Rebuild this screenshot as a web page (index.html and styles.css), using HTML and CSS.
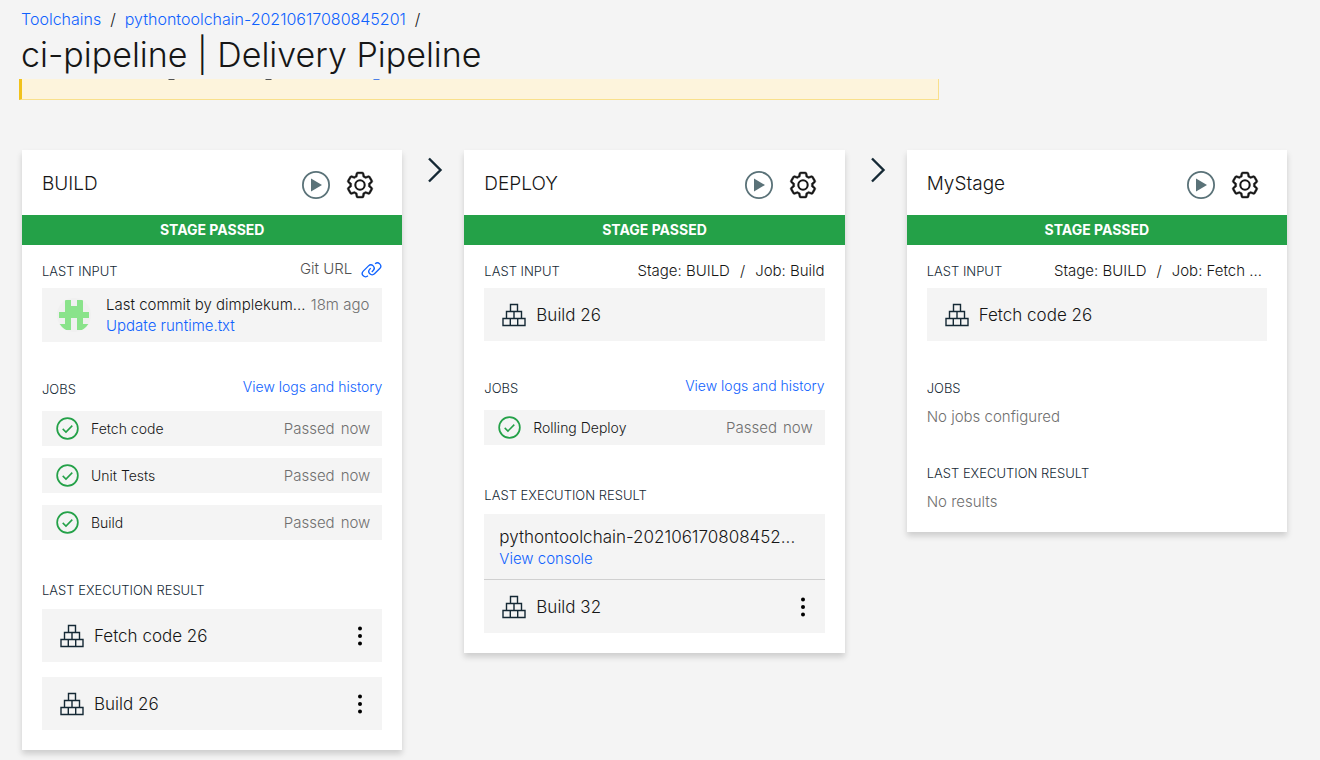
FILE: index.html
```html
<!DOCTYPE html>
<html lang="en">
<head>
<meta charset="utf-8">
<title>ci-pipeline | Delivery Pipeline</title>
<link rel="stylesheet" href="styles.css">
</head>
<body>
<svg class="sprite" aria-hidden="true">
  <symbol id="play" viewBox="0 0 28 28">
    <circle cx="14" cy="14" r="13.1" fill="none" stroke="#5a7278" stroke-width="1.8"/>
    <path d="M9 7.5v13L20 14z" fill="#5a7278"/>
  </symbol>
  <symbol id="gear" viewBox="0 0 32 32">
    <path fill="#161616" d="M27 16.76v-1.53l1.92-1.68A2 2 0 0 0 29.3 11l-2.36-4a2 2 0 0 0-1.73-1 2 2 0 0 0-.64.1l-2.43.82a11.35 11.35 0 0 0-1.31-.75l-.51-2.52a2 2 0 0 0-2-1.61h-4.68a2 2 0 0 0-2 1.61l-.51 2.52a11.48 11.48 0 0 0-1.32.75l-2.38-.86A2 2 0 0 0 6.79 6a2 2 0 0 0-1.73 1L2.7 11a2 2 0 0 0 .41 2.51L5 15.24v1.53l-1.89 1.68A2 2 0 0 0 2.7 21l2.36 4a2 2 0 0 0 1.73 1 2 2 0 0 0 .64-.1l2.43-.82a11.35 11.35 0 0 0 1.31.75l.51 2.52a2 2 0 0 0 2 1.61h4.72a2 2 0 0 0 2-1.61l.51-2.52a11.48 11.48 0 0 0 1.32-.75l2.42.82a2 2 0 0 0 .64.1 2 2 0 0 0 1.73-1l2.28-4a2 2 0 0 0-.41-2.51zM25.21 24l-3.43-1.16a8.86 8.86 0 0 1-2.71 1.57L18.36 28h-4.72l-.71-3.55a9.36 9.36 0 0 1-2.7-1.57L6.79 24l-2.36-4 2.72-2.4a8.9 8.9 0 0 1 0-3.13L4.43 12l2.36-4 3.43 1.16a8.86 8.86 0 0 1 2.71-1.57L13.64 4h4.72l.71 3.55a9.36 9.36 0 0 1 2.7 1.57L25.21 8l2.36 4-2.72 2.4a8.9 8.9 0 0 1 0 3.13L27.57 20z" stroke="#161616" stroke-width=".4"/>
    <circle cx="16" cy="16" r="5" fill="none" stroke="#161616" stroke-width="2.2"/>
  </symbol>
  <symbol id="check" viewBox="0 0 24 24">
    <circle cx="12" cy="12" r="10.8" fill="none" stroke="#24a148" stroke-width="1.8"/>
    <path d="M7 12.4l3.4 3.3L17 9" fill="none" stroke="#24a148" stroke-width="1.6"/>
  </symbol>
  <symbol id="boxes" viewBox="0 0 24 24">
    <path d="M8.5 1.5h7v7h-7zM4.5 8.5H12v7H4.5zM12 8.500h7.500v7H12zM1 15.500h7.300v7H1zM8.300 15.500h7.400v7H8.300zM15.700 15.500H23v7h-7.300z" fill="none" stroke="#152935" stroke-width="1.4"/>
  </symbol>
  <symbol id="dots" viewBox="0 0 6 20">
    <circle cx="3" cy="2.5" r="2"/><circle cx="3" cy="10" r="2"/><circle cx="3" cy="17.5" r="2"/>
  </symbol>
  <symbol id="next" viewBox="0 0 16 26">
    <path d="M2 1.5L13.5 13 2 24.5" fill="none" stroke="#152935" stroke-width="2.4"/>
  </symbol>
  <symbol id="link" viewBox="0 0 32 32">
    <path fill="#0f62fe" d="M29.25 6.76a6 6 0 0 0-8.5 0l1.42 1.42a4 4 0 1 1 5.67 5.67l-8 8a4 4 0 1 1-5.67-5.66l1.41-1.42-1.41-1.42-1.42 1.42a6 6 0 0 0 0 8.5A6 6 0 0 0 17 25a6 6 0 0 0 4.27-1.76l8-8a6 6 0 0 0-.02-8.48zM4.19 24.82a4 4 0 0 1 0-5.67l8-8a4 4 0 0 1 5.67 0A3.94 3.94 0 0 1 19 14a4 4 0 0 1-1.17 2.85L15.71 19l1.42 1.42 2.12-2.12a6 6 0 0 0-8.51-8.51l-8 8a6 6 0 0 0 0 8.51A6 6 0 0 0 7 28a6.07 6.07 0 0 0 4.28-1.76l-1.42-1.42a4 4 0 0 1-5.67 0z"/>
  </symbol>
</svg>

<header class="header">
  <nav class="crumbs" aria-label="Breadcrumb">
    <a href="#">Toolchains</a><span>/</span><a href="#">pythontoolchain-20210617080845201</a><span>/</span>
  </nav>
  <h1 class="title">ci-pipeline | Delivery Pipeline</h1>
</header>
<div class="banner">
  <svg class="banner-marks" viewBox="0 0 400 2" aria-hidden="true">
    <path d="M146 0h7l-1 1h-5zM243 0h7l-1 1h-5z" fill="#525252"/><path d="M351 0h7l-1 1h-5z" fill="#4c7fe8"/>
  </svg>
</div>

<main class="pipeline">
  <article class="card">
    <header class="card-head">
      <h2 class="card-title">BUILD</h2>
      <button class="icon-btn" aria-label="Run stage"><svg class="i-play"><use href="#play"/></svg></button>
      <button class="icon-btn" aria-label="Configure stage"><svg class="i-gear"><use href="#gear"/></svg></button>
    </header>
    <p class="status">STAGE PASSED</p>
    <div class="card-body">
      <section>
        <div class="section-head"><h3 class="label">LAST INPUT</h3><a class="git" href="#">Git URL <svg class="i-link"><use href="#link"/></svg></a></div>
        <div class="commit">
          <svg class="avatar" viewBox="0 0 34 34" aria-hidden="true">
            <defs><clipPath id="round"><circle cx="17" cy="17" r="17"/></clipPath></defs>
            <circle cx="17" cy="17" r="17" fill="#f0f0f0"/>
            <path clip-path="url(#round)" fill="#8ae38b" d="M8 2h6v6h6V2h6v12h6v6h-6v6h6v6H20V20h-6v12H2v-6h6v-6H2v-6h6z"/>
          </svg>
          <div class="commit-text">
            <div class="commit-line"><span>Last commit by dimplekum...</span><time class="muted">18m ago</time></div>
            <a href="#">Update runtime.txt</a>
          </div>
        </div>
      </section>
      <section class="jobs">
        <div class="section-head"><h3 class="label">JOBS</h3><a class="logs" href="#">View logs and history</a></div>
        <ul class="job-list">
          <li class="job"><svg class="i-check"><use href="#check"/></svg><span class="job-name">Fetch code</span><span class="muted">Passed</span><span class="muted">now</span></li>
          <li class="job"><svg class="i-check"><use href="#check"/></svg><span class="job-name">Unit Tests</span><span class="muted">Passed</span><span class="muted">now</span></li>
          <li class="job"><svg class="i-check"><use href="#check"/></svg><span class="job-name">Build</span><span class="muted">Passed</span><span class="muted">now</span></li>
        </ul>
      </section>
      <section class="results">
        <h3 class="label">LAST EXECUTION RESULT</h3>
        <div class="result-list">
          <div class="artifact"><svg class="i-boxes"><use href="#boxes"/></svg><span class="artifact-name">Fetch code 26</span><button class="icon-btn" aria-label="More"><svg class="i-dots"><use href="#dots"/></svg></button></div>
          <div class="artifact"><svg class="i-boxes"><use href="#boxes"/></svg><span class="artifact-name">Build 26</span><button class="icon-btn" aria-label="More"><svg class="i-dots"><use href="#dots"/></svg></button></div>
        </div>
      </section>
    </div>
  </article>

  <svg class="i-next" aria-hidden="true"><use href="#next"/></svg>

  <article class="card">
    <header class="card-head">
      <h2 class="card-title">DEPLOY</h2>
      <button class="icon-btn" aria-label="Run stage"><svg class="i-play"><use href="#play"/></svg></button>
      <button class="icon-btn" aria-label="Configure stage"><svg class="i-gear"><use href="#gear"/></svg></button>
    </header>
    <p class="status">STAGE PASSED</p>
    <div class="card-body">
      <section>
        <div class="section-head"><h3 class="label">LAST INPUT</h3><p class="source"><span>Stage: BUILD</span><span>/</span><span>Job: Build</span></p></div>
        <div class="artifact"><svg class="i-boxes"><use href="#boxes"/></svg><span class="artifact-name">Build 26</span></div>
      </section>
      <section class="jobs">
        <div class="section-head"><h3 class="label">JOBS</h3><a class="logs" href="#">View logs and history</a></div>
        <ul class="job-list">
          <li class="job"><svg class="i-check"><use href="#check"/></svg><span class="job-name">Rolling Deploy</span><span class="muted">Passed</span><span class="muted">now</span></li>
        </ul>
      </section>
      <section class="results">
        <h3 class="label">LAST EXECUTION RESULT</h3>
        <div class="deployment">
          <p class="deployment-name">pythontoolchain-202106170808452...</p>
          <a href="#">View console</a>
        </div>
        <div class="artifact"><svg class="i-boxes"><use href="#boxes"/></svg><span class="artifact-name">Build 32</span><button class="icon-btn" aria-label="More"><svg class="i-dots"><use href="#dots"/></svg></button></div>
      </section>
    </div>
  </article>

  <svg class="i-next" aria-hidden="true"><use href="#next"/></svg>

  <article class="card">
    <header class="card-head">
      <h2 class="card-title">MyStage</h2>
      <button class="icon-btn" aria-label="Run stage"><svg class="i-play"><use href="#play"/></svg></button>
      <button class="icon-btn" aria-label="Configure stage"><svg class="i-gear"><use href="#gear"/></svg></button>
    </header>
    <p class="status">STAGE PASSED</p>
    <div class="card-body">
      <section>
        <div class="section-head"><h3 class="label">LAST INPUT</h3><p class="source source-cut"><span>Stage: BUILD</span><span>/</span><span>Job: Fetch ...</span></p></div>
        <div class="artifact"><svg class="i-boxes"><use href="#boxes"/></svg><span class="artifact-name">Fetch code 26</span></div>
      </section>
      <section class="jobs">
        <h3 class="label">JOBS</h3>
        <p class="empty">No jobs configured</p>
      </section>
      <section class="results-empty">
        <h3 class="label">LAST EXECUTION RESULT</h3>
        <p class="empty">No results</p>
      </section>
    </div>
  </article>
</main>
</body>
</html>
```

FILE: styles.css
```css
* { box-sizing: border-box; }

body {
  margin: 0;
  background: #f4f4f4;
  color: #161616;
  font: 300 15px/20px Inter, "Open Sans", sans-serif;
}

h1, h2, h3, p, ul { margin: 0; padding: 0; font-weight: 300; }
ul { list-style: none; }
a { color: #0f62fe; text-decoration: none; }
svg { display: block; flex: none; }

.sprite { position: absolute; width: 0; height: 0; }

.icon-btn {
  display: flex;
  padding: 0;
  border: 0;
  background: none;
  cursor: pointer;
}

.header { padding: 9px 21px 0; }
.crumbs { display: flex; gap: 9px; font-size: 16px; }
.title { padding: 5px 0 3px; font-size: 34px; line-height: 42px; }

.banner {
  max-width: 920px;
  height: 21px;
  margin-left: 19px;
  overflow: hidden;
  background: #fdf4dc;
  border: solid #f9e08b;
  border-width: 0 1px 1px 0;
  border-left: 3px solid #f1c21b;
}
.banner-marks { width: 400px; height: 2px; }

.pipeline {
  display: grid;
  grid-template-columns: 1fr 62px 1fr 62px 1fr;
  align-items: start;
  padding: 50px 33px 12px 22px;
}

.i-next { width: 16px; height: 26px; margin: 7px 0 0 25px; }

.card {
  min-width: 0;
  background: #fff;
  box-shadow: 0 4px 6px rgba(0, 0, 0, 0.16);
}

.card-head {
  display: flex;
  align-items: center;
  gap: 15px;
  height: 65px;
  padding: 4px 27px 0 20px;
}
.card-title { flex: 1; padding-bottom: 2px; font-size: 19px; line-height: 24px; }
.i-play { width: 28px; height: 28px; }
.i-gear { width: 30px; height: 30px; }

.status {
  background: #24a148;
  color: #fff;
  font-size: 14px;
  font-weight: 700;
  line-height: 30px;
  text-align: center;
}

.card-body { padding: 16px 20px 20px; }

.section-head {
  display: flex;
  align-items: flex-start;
  justify-content: space-between;
}
.label { color: #152935; font-size: 13px; line-height: 20px; }
.git { display: flex; gap: 9px; align-items: center; height: 16px; color: #525252; }
.i-link { width: 21px; height: 21px; }
.logs { font-size: 14px; line-height: 16px; }
.source { display: flex; gap: 10px; }
.source-cut { padding-right: 5px; }

.commit {
  display: flex;
  align-items: center;
  gap: 15px;
  margin-top: 7px;
  padding: 6px 13px 6px 15px;
  background: #f4f4f4;
}
.avatar { width: 34px; height: 34px; }
.commit-text { flex: 1; min-width: 0; line-height: 21px; }
.commit-line { display: flex; justify-content: space-between; white-space: nowrap; }
.muted { color: #6f6f6f; }

.artifact {
  display: flex;
  align-items: center;
  gap: 10px;
  height: 53px;
  padding: 0 19px 0 18px;
  background: #f4f4f4;
}
.section-head + .artifact { margin-top: 7px; }
.artifact-name { flex: 1; font-size: 17px; }
.i-boxes { width: 24px; height: 24px; }
.i-dots { width: 6px; height: 20px; }

.jobs { margin-top: 37px; }
.job-list { display: grid; gap: 12px; margin-top: 12px; }
.job {
  display: flex;
  align-items: center;
  gap: 6px;
  height: 35px;
  padding: 0 12px 0 14px;
  background: #f4f4f4;
}
.job-name { flex: 1; padding-left: 6px; font-size: 14px; }
.i-check { width: 23px; height: 23px; }

.results { margin-top: 40px; }
.results > .label { margin-bottom: 9px; }
.result-list { display: grid; gap: 15px; }
.results-empty { margin-top: 36px; }
.empty { margin-top: 9px; color: #6f6f6f; }

.deployment {
  height: 66px;
  padding: 13px 15px 0;
  background: #f4f4f4;
  border-bottom: 1px solid #d0d0d0;
  line-height: 21px;
}
.deployment-name { font-size: 17px; white-space: nowrap; }
```
